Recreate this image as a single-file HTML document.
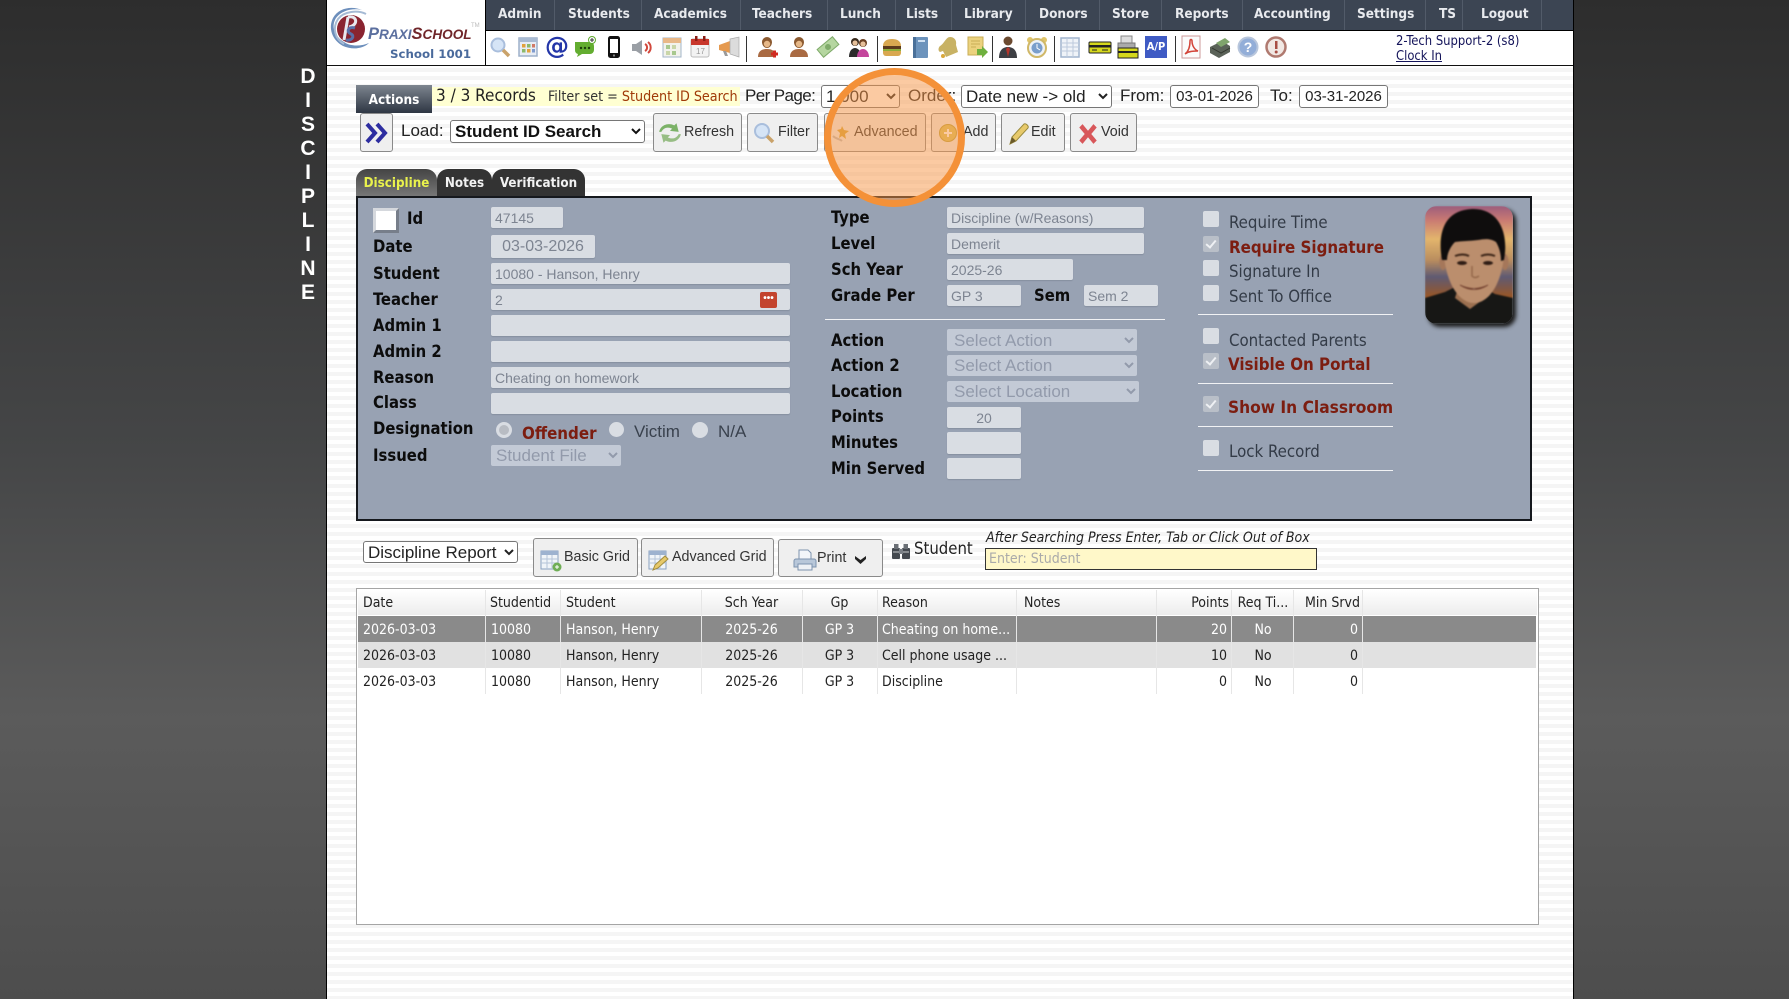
<!DOCTYPE html>
<html lang="en"><head><meta charset="utf-8"><title>Discipline</title>
<style>
html,body{margin:0;padding:0}
body{width:1789px;height:999px;position:relative;overflow:hidden;background:linear-gradient(180deg,#2d2d2d 0,#454647 45%,#5b5b5b 72%,#4d4d4d 100%);font-family:"Liberation Sans",Arial,sans-serif}
.a,.t,.l,.c,.s,.b,.i,.h,.d,.v{position:absolute;box-sizing:border-box}
svg{display:block}
.t{white-space:nowrap;line-height:20px;color:#222}
.n{position:absolute;top:0;height:30px;color:#e8eaee;font:bold 13.5px/29px "DejaVu Sans Condensed","DejaVu Sans",sans-serif;white-space:nowrap}
.ns{position:absolute;top:0;width:1px;height:30px;background:#525b69}
.l{font:bold 16.5px/20px "DejaVu Sans Condensed","DejaVu Sans",sans-serif;color:#0c0c0c;white-space:nowrap;margin-top:1px}
.c{font:16.7px/20px "DejaVu Sans Condensed","DejaVu Sans",sans-serif;color:#333b47;white-space:nowrap;margin-top:1px}
.r{font-weight:bold;color:#7c1d10;font-size:16.8px}
input.f{position:absolute;box-sizing:border-box;border:0;margin:0;background:#d9dde3;color:#7d8491;border-radius:2px;font:14px "Liberation Sans",sans-serif;padding:0 0 0 4px;box-shadow:0 1px 1px #8690a0}
select.f{position:absolute;box-sizing:border-box;border:0;margin:0;background:#c3cad6;color:#929aab;border-radius:2px;font:17px "Liberation Sans",sans-serif;padding:0 0 0 3px}
.cb{position:absolute;width:16px;height:16px;background:#d9dde3;border-radius:2px;box-sizing:border-box}
.cb.k{background:#b9bfc8}
.cb.k:after{content:"";position:absolute;left:5px;top:2px;width:4px;height:8px;border:solid #eef0f3;border-width:0 2px 2px 0;transform:rotate(40deg)}
.hr{position:absolute;height:1px;background:#f1f2f4}
.rd{position:absolute;border-radius:50%;background:#d9dde3;box-sizing:border-box}
.b{background:#efefef;border:1px solid #8a8a8a;border-radius:3px;font:14.3px/37px "Liberation Sans",sans-serif;color:#333;white-space:nowrap}
.b span{position:absolute;top:0}
.b svg{position:absolute}
select.w,input.w{position:absolute;box-sizing:border-box;background:#fff;border:1px solid #767676;border-radius:3px;color:#222;margin:0;font:17px "Liberation Sans",sans-serif}
input.w{font-size:15px;text-align:center;padding:0}
.sep{position:absolute;top:36px;width:1px;height:26px;background:#333}
.ic{position:absolute;top:35px;width:24px;height:24px}
.g{position:absolute;font:14px/26px "DejaVu Sans Condensed","DejaVu Sans",sans-serif;color:#222;white-space:nowrap;margin-top:1px}
.gl{position:absolute;width:1px;background:#e6e6e6;top:590px;height:104px}
.sd{position:absolute;left:288px;width:40px;text-align:center;color:#fff;font:bold 21px/24px "Liberation Sans",sans-serif}
</style></head><body>

<div class="sd" style="top:65px">D</div><div class="sd" style="top:89px">I</div><div class="sd" style="top:113px">S</div><div class="sd" style="top:137px">C</div><div class="sd" style="top:161px">I</div><div class="sd" style="top:185px">P</div><div class="sd" style="top:209px">L</div><div class="sd" style="top:233px">I</div><div class="sd" style="top:257px">N</div><div class="sd" style="top:281px">E</div>

<div class="a" style="left:326px;top:0;width:1248px;height:999px;background:repeating-linear-gradient(180deg,#fff 0,#fff 4px,#f5f5f5 4px,#f5f5f5 8px);border-left:1px solid #000;border-right:1px solid #000"></div>

<!-- header -->
<div class="a" style="left:327px;top:0;width:1246px;height:66px;background:#fff;border-bottom:1px solid #111"></div>
<div class="a" style="left:485px;top:0;width:1088px;height:31px;background:#3c4553;border-bottom:1px solid #000"></div>
<div class="a" style="left:485px;top:0;width:1px;height:65px;background:#000"></div>

<svg class="a" style="left:328px;top:4px" width="60" height="52" viewBox="0 0 60 52">
<path d="M34 6C25 2 11 3 5 14c-5 10-1 22 10 28 9 4 20 3 26-3-7 3-18 4-25-1C6 32 3 22 8 14 14 6 25 4 34 6z" fill="#6d8fbc"/>
<path d="M38 10C30 6 16 7 10 15c-6 9-3 20 6 25" fill="none" stroke="#a5bad4" stroke-width="2"/>
<circle cx="23" cy="25" r="14" fill="#8a2430"/>
<path d="M20 13l-4 23" stroke="#e8e8ee" stroke-width="3"/><path d="M20 13c9-2 11 8 1 10" fill="none" stroke="#e8e8ee" stroke-width="3"/>
<path d="M27 24c-7-2-9 4-4 6 4 2 1 7-5 6" fill="none" stroke="#5a6fa8" stroke-width="3"/>
</svg>
<div class="t" style="left:368px;top:24px;font:italic bold 13.6px/20px 'Liberation Sans',sans-serif;color:#5b6f9f"><span style="font-size:16.5px">P</span>RAXI<span style="color:#70262a;font-size:16.5px">S</span><span style="color:#70262a">CHOOL</span></div>
<div class="t" style="left:471px;top:22px;font-size:6px;line-height:8px;color:#bbb">TM</div>
<div class="t" style="left:390px;top:44px;font:bold 11.8px/20px 'DejaVu Sans',sans-serif;color:#4a6a9c">School 1001</div>

<!-- nav -->
<div class="ns" style="left:554px"></div><div class="ns" style="left:641px"></div><div class="ns" style="left:740px"></div><div class="ns" style="left:827px"></div><div class="ns" style="left:895px"></div><div class="ns" style="left:951px"></div><div class="ns" style="left:1025px"></div><div class="ns" style="left:1099px"></div><div class="ns" style="left:1161px"></div><div class="ns" style="left:1242px"></div><div class="ns" style="left:1344px"></div><div class="ns" style="left:1425px"></div><div class="ns" style="left:1462px"></div><div class="ns" style="left:1541px"></div>
<div class="n" style="left:498px">Admin</div><div class="n" style="left:568px">Students</div><div class="n" style="left:654px">Academics</div><div class="n" style="left:752px">Teachers</div><div class="n" style="left:840px">Lunch</div><div class="n" style="left:906px">Lists</div><div class="n" style="left:964px">Library</div><div class="n" style="left:1039px">Donors</div><div class="n" style="left:1112px">Store</div><div class="n" style="left:1175px">Reports</div><div class="n" style="left:1254px">Accounting</div><div class="n" style="left:1357px">Settings</div><div class="n" style="left:1439px">TS</div><div class="n" style="left:1481px">Logout</div>

<!-- toolbar icons -->
<svg class="ic" style="left:488px" viewBox="0 0 24 24"><circle cx="10" cy="10" r="6.500" fill="#d5e4f6" stroke="#a9bedc" stroke-width="2"/><path d="M15 15l6 6" stroke="#c9a26a" stroke-width="3.500"/></svg>
<svg class="ic" style="left:516px" viewBox="0 0 24 24"><rect x="3" y="3" width="18" height="18" fill="#e8edf5" stroke="#9db0ca" stroke-width="1.500"/><rect x="3" y="3" width="18" height="4" fill="#a9bbd3"/><rect x="6" y="9" width="3.500" height="3.500" fill="#e2a23c"/><rect x="11" y="9" width="3.500" height="3.500" fill="#8cb96a"/><rect x="16" y="9" width="3" height="3.500" fill="#d17a66"/><rect x="6" y="14" width="3.500" height="3.500" fill="#8cb96a"/><rect x="11" y="14" width="3.500" height="3.500" fill="#e2a23c"/><rect x="16" y="14" width="3" height="3.500" fill="#7f9bce"/></svg>
<div class="t" style="left:544px;top:33px;width:26px;text-align:center;font:bold 24px/26px 'DejaVu Sans',sans-serif;color:#2436a8">@</div>
<svg class="ic" style="left:573px" viewBox="0 0 24 24"><path d="M2 7h15a4 4 0 0 1 4 4v4a4 4 0 0 1-4 4H9l-5 3 1-3a4 4 0 0 1-3-4z" fill="#63ad30"/><circle cx="8" cy="13" r="1.200" fill="#1d3d0c"/><circle cx="12" cy="13" r="1.200" fill="#1d3d0c"/><circle cx="16" cy="13" r="1.200" fill="#1d3d0c"/><circle cx="19" cy="5" r="3.500" fill="#fff" stroke="#5eaa2c"/><path d="M19 3v4M17 5h4" stroke="#333"/></svg>
<svg class="ic" style="left:602px" viewBox="0 0 24 24"><rect x="6" y="1" width="12" height="22" rx="2.500" fill="#111"/><rect x="8" y="4" width="8" height="14" fill="#fff"/><circle cx="12" cy="20.500" r="1.100" fill="#888"/></svg>
<svg class="ic" style="left:630px" viewBox="0 0 24 24"><path d="M2 9h4l6-4v15l-6-4H2z" fill="#9a9fa5"/><path d="M15 9a4 4 0 0 1 0 7M18 7a7 7 0 0 1 0 11" fill="none" stroke="#d1483c" stroke-width="2"/></svg>
<svg class="ic" style="left:660px" viewBox="0 0 24 24"><rect x="3" y="3" width="18" height="19" fill="#f2f2ec" stroke="#a3b5c8"/><rect x="3" y="3" width="18" height="5" fill="#e8b888"/><rect x="6" y="10" width="4" height="4" fill="#a8c88e"/><rect x="12" y="10" width="4" height="4" fill="#c9d6a8"/><rect x="6" y="16" width="4" height="4" fill="#c9d6a8"/><rect x="12" y="16" width="4" height="4" fill="#a8c88e"/></svg>
<svg class="ic" style="left:688px" viewBox="0 0 24 24"><rect x="3" y="4" width="18" height="18" rx="2" fill="#f3f3f3" stroke="#bbb"/><rect x="3" y="4" width="18" height="6" fill="#c8372c"/><rect x="7" y="1" width="2.500" height="5" fill="#8a1e16"/><rect x="15" y="1" width="2.500" height="5" fill="#8a1e16"/><text x="8" y="19" font-size="8" fill="#999" font-family="Liberation Sans">17</text></svg>
<svg class="ic" style="left:717px" viewBox="0 0 24 24"><path d="M2 10l11-4v12L2 15z" fill="#e59a50"/><path d="M13 4l9-2v20l-9-3z" fill="#dcdcdc" stroke="#aaa" stroke-width=".7"/><path d="M6 16l2 5h3l-2-5z" fill="#9a9a9a"/></svg>
<div class="sep" style="left:746px"></div>
<svg class="ic" style="left:755px" viewBox="0 0 24 24"><path d="M12 2a5 5 0 0 0-5 5c0 3 2 6 5 6s5-3 5-6a5 5 0 0 0-5-5z" fill="#8c5a30"/><path d="M3 22c0-6 4-8 9-8s9 2 9 8z" fill="#a96a42"/><circle cx="12" cy="9" r="3.200" fill="#e6b888"/><path d="M16 19h7M19.500 15.500v7" stroke="#d12b20" stroke-width="3"/></svg>
<svg class="ic" style="left:787px" viewBox="0 0 24 24"><path d="M12 2a5 5 0 0 0-5 5c0 3 2 6 5 6s5-3 5-6a5 5 0 0 0-5-5z" fill="#8c5a30"/><path d="M3 22c0-6 4-8 9-8s9 2 9 8z" fill="#a96a42"/><circle cx="12" cy="9" r="3.200" fill="#e6b888"/></svg>
<svg class="ic" style="left:816px" viewBox="0 0 24 24"><g transform="rotate(-40 12 12)"><rect x="2" y="7" width="20" height="10" fill="#b5d6a0" stroke="#7fab6a"/><circle cx="12" cy="12" r="3" fill="#7fab6a"/></g></svg>
<svg class="ic" style="left:847px" viewBox="0 0 24 24"><circle cx="8" cy="7" r="4" fill="#3a2c1e"/><circle cx="16" cy="8" r="4" fill="#6a4022"/><circle cx="8" cy="8" r="2.600" fill="#e6c09a"/><circle cx="16" cy="9" r="2.600" fill="#e6c09a"/><path d="M2 22c0-6 3-9 6-9s6 3 6 9z" fill="#2c2c2c"/><path d="M10 22c0-5 3-8 6-8s6 3 6 8z" fill="#c4459c"/></svg>
<div class="sep" style="left:877px"></div>
<svg class="ic" style="left:880px" viewBox="0 0 24 24"><path d="M3 11c0-5 4-7 9-7s9 2 9 7z" fill="#d9a850"/><rect x="3" y="11" width="18" height="3" fill="#5c3a1c"/><rect x="3" y="14" width="18" height="2" fill="#8fae3a"/><path d="M3 16h18v2a3 3 0 0 1-3 3H6a3 3 0 0 1-3-3z" fill="#d9a850"/></svg>
<svg class="ic" style="left:908px" viewBox="0 0 24 24"><rect x="5" y="2" width="15" height="21" rx="1" fill="#6c93bc"/><rect x="5" y="2" width="3" height="21" fill="#4a7099"/><rect x="10" y="5" width="7" height="2" fill="#cfe0f2"/></svg>
<svg class="ic" style="left:936px" viewBox="0 0 24 24"><path d="M14 2c4 0 7 3 6 8l2 7-12 5-3-6-3 1c-2-1-2-4 0-6 4-2 6-9 10-9z" fill="#c8b264"/><circle cx="7" cy="21" r="2" fill="#d8a83c"/></svg>
<svg class="ic" style="left:965px" viewBox="0 0 24 24"><rect x="3" y="2" width="15" height="18" fill="#ebd27e" stroke="#c8ad56"/><path d="M6 6h9M6 9h9M6 12h5" stroke="#c8ad56"/><path d="M12 14h5v-3l6 6-6 6v-3h-5z" fill="#6fb03e"/></svg>
<div class="sep" style="left:992px"></div>
<svg class="ic" style="left:996px" viewBox="0 0 24 24"><circle cx="12" cy="6" r="4.500" fill="#6b4a30"/><path d="M3 23c0-8 4-11 9-11s9 3 9 11z" fill="#3d3f44"/><path d="M12 12l-2 2 2 8 2-8z" fill="#b4362c"/></svg>
<svg class="ic" style="left:1025px" viewBox="0 0 24 24"><circle cx="5" cy="5" r="3" fill="#e0c56a"/><circle cx="19" cy="5" r="3" fill="#e0c56a"/><circle cx="12" cy="13" r="9" fill="#eef2f7" stroke="#d0b868" stroke-width="2"/><circle cx="12" cy="13" r="5.500" fill="#7a9ecb"/><path d="M12 9v4l3 2" stroke="#fff" fill="none"/></svg>
<div class="sep" style="left:1054px"></div>
<svg class="ic" style="left:1058px" viewBox="0 0 24 24"><rect x="3" y="3" width="18" height="19" fill="#eff3f8" stroke="#a0b4cd" stroke-width="1.500"/><path d="M3 8h18M3 12h18M3 16h18M9 3v19M15 3v19" stroke="#bccadc"/></svg>
<svg class="ic" style="left:1088px" viewBox="0 0 24 24"><rect x="1" y="7" width="22" height="11" rx="1" fill="#d5d81c" stroke="#222"/><rect x="1" y="10" width="22" height="2.500" fill="#222"/><path d="M4 15h5M14 15h6" stroke="#222"/></svg>
<svg class="ic" style="left:1115px" viewBox="0 0 24 24"><rect x="6" y="1" width="11" height="8" fill="#ddd" stroke="#888"/><rect x="3" y="8" width="17" height="6" fill="#aaa" stroke="#777"/><rect x="3" y="13" width="20" height="10" fill="#d5d81c" stroke="#222"/><rect x="3" y="16" width="20" height="2" fill="#222"/></svg>
<div class="a" style="left:1145px;top:36px;width:22px;height:22px;background:#3f5bc4;color:#fff;font:bold 11px/22px 'DejaVu Sans Condensed',sans-serif;text-align:center">A/P</div>
<div class="sep" style="left:1175px"></div>
<svg class="ic" style="left:1179px" viewBox="0 0 24 24"><rect x="3" y="1" width="18" height="22" fill="#fbfbfb" stroke="#c99"/><path d="M6 19c4-3 5-9 5-13 0-2 2-2 2 0 0 5 3 9 6 10-4 0-9 0-13 3z" fill="none" stroke="#d3453a" stroke-width="1.500"/></svg>
<svg class="ic" style="left:1208px" viewBox="0 0 24 24"><path d="M2 12l12-6 8 5v6l-11 6-9-5z" fill="#5a6258"/><path d="M8 8l9-5 5 4-9 5z" fill="#7fa46c"/><path d="M4 13l9 5 9-5" fill="none" stroke="#33382f"/></svg>
<svg class="ic" style="left:1236px" viewBox="0 0 24 24"><circle cx="12" cy="12" r="9.500" fill="#93aed8" stroke="#b8c6dc" stroke-width="2"/><text x="12" y="17" text-anchor="middle" font-size="14" font-weight="bold" fill="#fff" font-family="Liberation Sans">?</text></svg>
<svg class="ic" style="left:1264px" viewBox="0 0 24 24"><circle cx="12" cy="12" r="9.500" fill="#f1e8e4" stroke="#b07a70" stroke-width="2.500"/><rect x="11" y="6" width="2.500" height="8" fill="#a84e44"/><circle cx="12.200" cy="17" r="1.500" fill="#a84e44"/></svg>

<div class="t" style="left:1396px;top:32px;font:12.9px/20px 'DejaVu Sans Condensed','DejaVu Sans',sans-serif;color:#14145a">2-Tech Support-2 (s8)</div>
<div class="t" style="left:1396px;top:47px;font:12.9px/20px 'DejaVu Sans Condensed','DejaVu Sans',sans-serif;color:#14145a;text-decoration:underline">Clock In</div>

<!-- row 1 -->
<div class="a" style="left:356px;top:85px;width:76px;height:28px;background:linear-gradient(180deg,#7d858f,#2e3643);color:#fff;font:bold 13.5px/31px 'DejaVu Sans Condensed','DejaVu Sans',sans-serif;text-align:center">Actions</div>
<div class="a" style="left:432px;top:87px;width:308px;height:19px;background:#ffffd2"></div>
<div class="t" style="left:436px;top:86px;font:17px/20px 'DejaVu Sans Condensed','DejaVu Sans',sans-serif;color:#222">3 / 3 Records</div>
<div class="t" style="left:548px;top:87px;font:14.2px/20px 'DejaVu Sans Condensed','DejaVu Sans',sans-serif;color:#333">Filter set = <span style="color:#a03a08">Student ID Search</span></div>
<div class="t" style="left:745px;top:86px;font:17px/20px 'Liberation Sans',sans-serif;letter-spacing:-.6px">Per Page:</div>
<select class="w" style="left:821px;top:85px;width:79px;height:23px"><option>1,000</option></select>
<div class="t" style="left:908px;top:86px;font:17px/20px 'Liberation Sans',sans-serif">Order:</div>
<select class="w" style="left:961px;top:85px;width:151px;height:23px"><option>Date new -&gt; old</option></select>
<div class="t" style="left:1120px;top:86px;font:17px/20px 'Liberation Sans',sans-serif">From:</div>
<input class="w" style="left:1170px;top:85px;width:89px;height:23px" value="03-01-2026">
<div class="t" style="left:1270px;top:86px;font:17px/20px 'Liberation Sans',sans-serif">To:</div>
<input class="w" style="left:1299px;top:85px;width:89px;height:23px" value="03-31-2026">

<!-- row 2 -->
<div class="b" style="left:360px;top:113px;width:33px;height:39px"><svg style="left:3px;top:8px" width="26" height="22" viewBox="0 0 26 22"><path d="M3 2l8 9-8 9M13 2l8 9-8 9" fill="none" stroke="#2d2da0" stroke-width="4"/></svg></div>
<div class="t" style="left:401px;top:121px;font:17px/20px 'Liberation Sans',sans-serif">Load:</div>
<select class="w" style="left:450px;top:120px;width:195px;height:23px;font-weight:bold;color:#111"><option>Student ID Search</option></select>
<div class="b" style="left:653px;top:113px;width:89px;height:39px"><svg style="left:3px;top:6px" width="26" height="26" viewBox="0 0 24 24"><path d="M2 11c1-6 8-9 14-6l2-2 2 8-8-1 2-2c-4-2-8-1-10 3z" fill="#7cb268"/><path d="M22 13c-1 6-8 9-14 6l-2 2-2-8 8 1-2 2c4 2 8 1 10-3z" fill="#97bd84"/></svg><span style="left:30px">Refresh</span></div>
<div class="b" style="left:747px;top:113px;width:71px;height:39px"><svg style="left:4px;top:7px" width="24" height="24" viewBox="0 0 24 24"><circle cx="10" cy="10" r="7" fill="#d5e4f6" stroke="#a9bedc" stroke-width="2"/><path d="M15 15l6 6" stroke="#c9a26a" stroke-width="3.500"/></svg><span style="left:30px">Filter</span></div>
<div class="b" style="left:824px;top:113px;width:102px;height:39px"><svg style="left:7px;top:9px" width="20" height="22" viewBox="0 0 20 22"><path d="M10 3l2 4 5 1-4 3 1 5-4-3-3 2 1-5-3-3 4-1z" fill="#d5a63d"/><path d="M1 13c3 3 7 3 9 5" stroke="#bbb" fill="none" stroke-width="2"/></svg><span style="left:29px">Advanced</span></div>
<div class="b" style="left:931px;top:113px;width:65px;height:39px"><svg style="left:6px;top:9px" width="20" height="20" viewBox="0 0 20 20"><circle cx="10" cy="10" r="8.500" fill="#d8c560" stroke="#b9a33c"/><path d="M10 6v8M6 10h8" stroke="#fff" stroke-width="2"/></svg><span style="left:31px">Add</span></div>
<div class="b" style="left:1001px;top:113px;width:64px;height:39px"><svg style="left:5px;top:7px" width="24" height="26" viewBox="0 0 24 26"><path d="M3 23l2-7L17 3c2-1 5 2 4 4L9 20z" fill="#e7c96a" stroke="#9a8a3c"/><path d="M3 23l2-7 4 4z" fill="#6b5a2a"/></svg><span style="left:29px">Edit</span></div>
<div class="b" style="left:1070px;top:113px;width:67px;height:39px"><svg style="left:5px;top:8px" width="24" height="24" viewBox="0 0 22 22"><path d="M3 5l3-3 5 6 5-6 3 3-5 6 5 6-3 3-5-6-5 6-3-3 5-6z" fill="#d8575a"/></svg><span style="left:30px">Void</span></div>

<!-- tabs -->
<div class="a" style="left:356px;top:169px;width:81px;height:27px;border-radius:11px 11px 0 0;background:linear-gradient(180deg,#444,#777);color:#e9f24c;font:bold 13.3px/30px 'DejaVu Sans Condensed','DejaVu Sans',sans-serif;text-align:center">Discipline</div>
<div class="a" style="left:437px;top:169px;width:55px;height:27px;border-radius:11px 11px 0 0;background:#333;color:#f2f2f2;font:bold 13.3px/30px 'DejaVu Sans Condensed','DejaVu Sans',sans-serif;text-align:center">Notes</div>
<div class="a" style="left:492px;top:169px;width:93px;height:27px;border-radius:11px 11px 0 0;background:#333;color:#f2f2f2;font:bold 13.3px/30px 'DejaVu Sans Condensed','DejaVu Sans',sans-serif;text-align:center">Verification</div>

<!-- panel -->
<div class="a" style="left:356px;top:196px;width:1176px;height:325px;background:#98a2b3;border:2px solid #15181d"></div>

<div class="a" style="left:373px;top:208px;width:26px;height:25px;background:#fff;border:3px solid;border-color:#d5d8dd #777e8a #777e8a #d5d8dd"></div>
<div class="l" style="left:407px;top:208px">Id</div>
<div class="l" style="left:373px;top:236px">Date</div>
<div class="l" style="left:373px;top:263px">Student</div>
<div class="l" style="left:373px;top:289px">Teacher</div>
<div class="l" style="left:373px;top:315px">Admin 1</div>
<div class="l" style="left:373px;top:341px">Admin 2</div>
<div class="l" style="left:373px;top:367px">Reason</div>
<div class="l" style="left:373px;top:392px">Class</div>
<div class="l" style="left:373px;top:418px">Designation</div>
<div class="l" style="left:373px;top:445px">Issued</div>

<input class="f" style="left:491px;top:207px;width:72px;height:21px" value="47145">
<input class="f" style="left:491px;top:235px;width:104px;height:23px;font-size:16px;padding:0;text-align:center" value="03-03-2026">
<input class="f" style="left:491px;top:263px;width:299px;height:21px" value="10080 - Hanson, Henry">
<input class="f" style="left:491px;top:289px;width:299px;height:21px" value="2">
<div class="a" style="left:760px;top:292px;width:17px;height:16px;border-radius:2px;background:#c3432d;color:#fff;font:bold 10px/14px 'Liberation Sans',sans-serif;text-align:center">•••</div>
<input class="f" style="left:491px;top:315px;width:299px;height:21px">
<input class="f" style="left:491px;top:341px;width:299px;height:21px">
<input class="f" style="left:491px;top:367px;width:299px;height:21px" value="Cheating on homework">
<input class="f" style="left:491px;top:393px;width:299px;height:21px">

<div class="rd" style="left:496px;top:422px;width:16px;height:16px;background:#b8bcc3;border:3px solid #d9dde3"></div>
<div class="c r" style="left:522px;top:422px">Offender</div>
<div class="rd" style="left:609px;top:422px;width:15px;height:15px"></div>
<div class="t" style="left:634px;top:422px;font-size:17px;color:#39414d">Victim</div>
<div class="rd" style="left:692px;top:422px;width:16px;height:16px"></div>
<div class="t" style="left:718px;top:422px;font-size:17px;color:#39414d">N/A</div>
<select class="f" style="left:491px;top:445px;width:130px;height:21px;padding-left:1px"><option>Student File</option></select>

<div class="l" style="left:831px;top:207px">Type</div>
<div class="l" style="left:831px;top:233px">Level</div>
<div class="l" style="left:831px;top:259px">Sch Year</div>
<div class="l" style="left:831px;top:285px">Grade Per</div>
<div class="l" style="left:1034px;top:285px">Sem</div>
<input class="f" style="left:947px;top:207px;width:197px;height:21px" value="Discipline (w/Reasons)">
<input class="f" style="left:947px;top:233px;width:197px;height:21px" value="Demerit">
<input class="f" style="left:947px;top:259px;width:126px;height:21px" value="2025-26">
<input class="f" style="left:947px;top:285px;width:74px;height:21px" value="GP 3">
<input class="f" style="left:1084px;top:285px;width:74px;height:21px" value="Sem 2">
<div class="hr" style="left:825px;top:319px;width:340px"></div>
<div class="l" style="left:831px;top:330px">Action</div>
<div class="l" style="left:831px;top:355px">Action 2</div>
<div class="l" style="left:831px;top:381px">Location</div>
<div class="l" style="left:831px;top:406px">Points</div>
<div class="l" style="left:831px;top:432px">Minutes</div>
<div class="l" style="left:831px;top:458px">Min Served</div>
<select class="f" style="left:947px;top:329px;width:190px;height:22px"><option>Select Action</option></select>
<select class="f" style="left:947px;top:355px;width:190px;height:21px"><option>Select Action</option></select>
<select class="f" style="left:947px;top:381px;width:192px;height:21px"><option>Select Location</option></select>
<input class="f" style="left:947px;top:407px;width:74px;height:21px;text-align:center;padding:0" value="20">
<input class="f" style="left:947px;top:432px;width:74px;height:22px">
<input class="f" style="left:947px;top:458px;width:74px;height:21px">

<div class="cb" style="left:1203px;top:211px"></div><div class="c" style="left:1229px;top:211px">Require Time</div>
<div class="cb k" style="left:1203px;top:236px"></div><div class="c r" style="left:1229px;top:236px">Require Signature</div>
<div class="cb" style="left:1203px;top:260px"></div><div class="c" style="left:1229px;top:260px">Signature In</div>
<div class="cb" style="left:1203px;top:285px"></div><div class="c" style="left:1229px;top:285px">Sent To Office</div>
<div class="hr" style="left:1198px;top:314px;width:195px"></div>
<div class="cb" style="left:1203px;top:328px"></div><div class="c" style="left:1229px;top:329px">Contacted Parents</div>
<div class="cb k" style="left:1203px;top:353px"></div><div class="c r" style="left:1228px;top:353px">Visible On Portal</div>
<div class="hr" style="left:1198px;top:383px;width:195px"></div>
<div class="cb k" style="left:1203px;top:396px"></div><div class="c r" style="left:1228px;top:397px;font-size:17.2px">Show In Classroom</div>
<div class="hr" style="left:1198px;top:426px;width:195px"></div>
<div class="cb" style="left:1203px;top:440px"></div><div class="c" style="left:1229px;top:440px">Lock Record</div>
<div class="hr" style="left:1198px;top:470px;width:195px"></div>

<!-- photo -->
<div class="a" style="left:1425px;top:206px;width:88px;height:118px;border-radius:12px;box-shadow:3px 3px 4px #1c1c1c;overflow:hidden">
<svg width="88" height="118" viewBox="0 0 88 118" style="filter:blur(.7px)"><defs><linearGradient id="sk" x1="0" y1="0" x2="0" y2="1"><stop offset="0" stop-color="#9c5c7c"/><stop offset=".12" stop-color="#c97a72"/><stop offset=".28" stop-color="#e3b56c"/><stop offset=".46" stop-color="#b98c5e"/><stop offset=".6" stop-color="#5f5a72"/><stop offset=".76" stop-color="#95562a"/><stop offset="1" stop-color="#5a3018"/></linearGradient></defs>
<rect width="88" height="118" fill="url(#sk)"/>
<path d="M0 118V92l20-6 12-6h24l14 8 18 4v26z" fill="#171715"/>
<path d="M33 82h24l3 10-15 11-15-11z" fill="#9c7050"/>
<ellipse cx="18" cy="56" rx="3.500" ry="8" fill="#a5775a"/><ellipse cx="80" cy="56" rx="3.500" ry="8" fill="#a5775a"/>
<path d="M19 44C19 30 30 24 49 24s30 6 30 20c0 26-12 53-30 53S19 70 19 44z" fill="#bb8e6d"/>
<path d="M17 54C12 26 20 4 47 3c27-1 37 24 32 51l-3 1c0-8-2-14-5-19-6-4-12-3-18-2-8 1-16 1-23 2-5 5-8 12-8 18z" fill="#0f0d0d"/>
<ellipse cx="37" cy="57" rx="5" ry="2" fill="#2e1c14"/><ellipse cx="63" cy="57" rx="5" ry="2" fill="#2e1c14"/>
<path d="M30 50q8-3 14 0M56 50q7-3 14 0" stroke="#3b2417" stroke-width="2" fill="none"/>
<path d="M47 60v10q3 3 7 0" stroke="#94684a" fill="none" stroke-width="1.500"/>
<path d="M35 79q14 7 28 0q-14 9-28 0z" fill="#f2e8dc" stroke="#6f3d2c" stroke-width=".8"/>
</svg></div>

<!-- controls -->
<select class="w" style="left:363px;top:541px;width:155px;height:22px;font-size:17px"><option>Discipline Report</option></select>
<div class="b" style="left:533px;top:538px;width:105px;height:39px"><svg style="left:6px;top:9px" width="22" height="24" viewBox="0 0 22 24"><rect x="1" y="3" width="17" height="18" fill="#f0f4f8" stroke="#8aa2c0"/><rect x="1" y="3" width="17" height="4" fill="#9db2cf"/><path d="M1 11h17M1 15h17M7 7v14M12 7v14" stroke="#b5c4d8"/><circle cx="17" cy="19" r="4.500" fill="#6fae55"/><path d="M17 17v4M15 19h4" stroke="#fff"/></svg><span style="left:30px">Basic Grid</span></div>
<div class="b" style="left:641px;top:538px;width:133px;height:39px"><svg style="left:6px;top:9px" width="22" height="24" viewBox="0 0 22 24"><rect x="1" y="3" width="17" height="18" fill="#f0f4f8" stroke="#8aa2c0"/><rect x="1" y="3" width="17" height="4" fill="#9db2cf"/><path d="M1 11h17M1 15h17M7 7v14M12 7v14" stroke="#b5c4d8"/><path d="M5 22l2-5 10-9 3 3-10 9z" fill="#e7c96a" stroke="#a28d3e"/></svg><span style="left:30px">Advanced Grid</span></div>
<div class="b" style="left:778px;top:539px;width:105px;height:38px"><svg style="left:14px;top:8px" width="24" height="24" viewBox="0 0 24 24"><path d="M6 2h9l3 3v6H6z" fill="#f2f5f9" stroke="#7d93ae"/><path d="M3 11h18a2 2 0 0 1 2 2v6H1v-6a2 2 0 0 1 2-2z" fill="#b8c7d9" stroke="#7d93ae"/><rect x="5" y="16" width="14" height="6" fill="#eef1f5" stroke="#7d93ae"/></svg><span style="left:38px">Print</span><svg style="left:76px;top:15px" width="11" height="9" viewBox="0 0 11 9"><path d="M0 1l5.500 4 5.500-4v3l-5.500 5L0 4z" fill="#222"/></svg></div>
<svg class="a" style="left:892px;top:543px" width="18" height="16" viewBox="0 0 18 16"><rect x="0" y="5" width="8" height="11" rx="1" fill="#43484e"/><rect x="10" y="5" width="8" height="11" rx="1" fill="#43484e"/><rect x="2" y="1" width="4.500" height="5" fill="#6a6f75"/><rect x="11.500" y="1" width="4.500" height="5" fill="#6a6f75"/><rect x="7" y="6" width="4" height="5" fill="#7a7f85"/><path d="M1 9h6M11 9h6" stroke="#c8cbcf"/></svg>
<div class="t" style="left:914px;top:539px;font:16.6px/20px 'DejaVu Sans Condensed','DejaVu Sans',sans-serif;color:#222">Student</div>
<div class="t" style="left:986px;top:528px;font:italic 14px/20px 'DejaVu Sans Condensed','DejaVu Sans',sans-serif;color:#222">After Searching Press Enter, Tab or Click Out of Box</div>
<input class="a" style="left:985px;top:548px;width:332px;height:22px;background:#fff8c9;border:1px solid #333;padding:0 3px;font:14px 'DejaVu Sans Condensed','DejaVu Sans',sans-serif;color:#aaa;margin:0" value="Enter: Student">

<!-- grid -->
<div class="a" style="left:356px;top:588px;width:1183px;height:337px;background:#fff;border:1px solid #a5a5a5"></div>
<div class="a" style="left:358px;top:590px;width:1179px;height:25px;background:linear-gradient(180deg,#fff,#ececec)"></div>
<div class="a" style="left:358px;top:616px;width:1178px;height:26px;background:#8a8a8a"></div>
<div class="a" style="left:358px;top:642px;width:1178px;height:26px;background:#e1e1e1"></div>
<div class="gl" style="left:485px"></div><div class="gl" style="left:560px"></div><div class="gl" style="left:701px"></div><div class="gl" style="left:802px"></div><div class="gl" style="left:877px"></div><div class="gl" style="left:1016px"></div><div class="gl" style="left:1156px"></div><div class="gl" style="left:1231px"></div><div class="gl" style="left:1293px"></div><div class="gl" style="left:1362px"></div>

<div class="g" style="left:363px;top:589px">Date</div><div class="g" style="left:490px;top:589px">Studentid</div><div class="g" style="left:566px;top:589px">Student</div><div class="g" style="left:701px;top:589px;width:101px;text-align:center">Sch Year</div><div class="g" style="left:802px;top:589px;width:75px;text-align:center">Gp</div><div class="g" style="left:882px;top:589px">Reason</div><div class="g" style="left:1024px;top:589px">Notes</div><div class="g" style="left:1129px;top:589px;width:100px;text-align:right">Points</div><div class="g" style="left:1232px;top:589px;width:62px;text-align:center">Req Ti...</div><div class="g" style="left:1260px;top:589px;width:100px;text-align:right">Min Srvd</div>

<div class="g" style="left:363px;top:616px;color:#fff">2026-03-03</div><div class="g" style="left:491px;top:616px;color:#fff">10080</div><div class="g" style="left:566px;top:616px;color:#fff">Hanson, Henry</div><div class="g" style="left:701px;top:616px;width:101px;text-align:center;color:#fff">2025-26</div><div class="g" style="left:802px;top:616px;width:75px;text-align:center;color:#fff">GP 3</div><div class="g" style="left:882px;top:616px;color:#fff">Cheating on home...</div><div class="g" style="left:1130px;top:616px;width:97px;text-align:right;color:#fff">20</div><div class="g" style="left:1232px;top:616px;width:62px;text-align:center;color:#fff">No</div><div class="g" style="left:1260px;top:616px;width:98px;text-align:right;color:#fff">0</div>

<div class="g" style="left:363px;top:642px">2026-03-03</div><div class="g" style="left:491px;top:642px">10080</div><div class="g" style="left:566px;top:642px">Hanson, Henry</div><div class="g" style="left:701px;top:642px;width:101px;text-align:center">2025-26</div><div class="g" style="left:802px;top:642px;width:75px;text-align:center">GP 3</div><div class="g" style="left:882px;top:642px">Cell phone usage ...</div><div class="g" style="left:1130px;top:642px;width:97px;text-align:right">10</div><div class="g" style="left:1232px;top:642px;width:62px;text-align:center">No</div><div class="g" style="left:1260px;top:642px;width:98px;text-align:right">0</div>

<div class="g" style="left:363px;top:668px">2026-03-03</div><div class="g" style="left:491px;top:668px">10080</div><div class="g" style="left:566px;top:668px">Hanson, Henry</div><div class="g" style="left:701px;top:668px;width:101px;text-align:center">2025-26</div><div class="g" style="left:802px;top:668px;width:75px;text-align:center">GP 3</div><div class="g" style="left:882px;top:668px">Discipline</div><div class="g" style="left:1130px;top:668px;width:97px;text-align:right">0</div><div class="g" style="left:1232px;top:668px;width:62px;text-align:center">No</div><div class="g" style="left:1260px;top:668px;width:98px;text-align:right">0</div>

<!-- highlight -->
<div class="a" style="left:824px;top:68px;width:141px;height:139px;border-radius:50%;border:7px solid #f49138;background:rgba(247,150,70,.5);pointer-events:none"></div>
</body></html>
